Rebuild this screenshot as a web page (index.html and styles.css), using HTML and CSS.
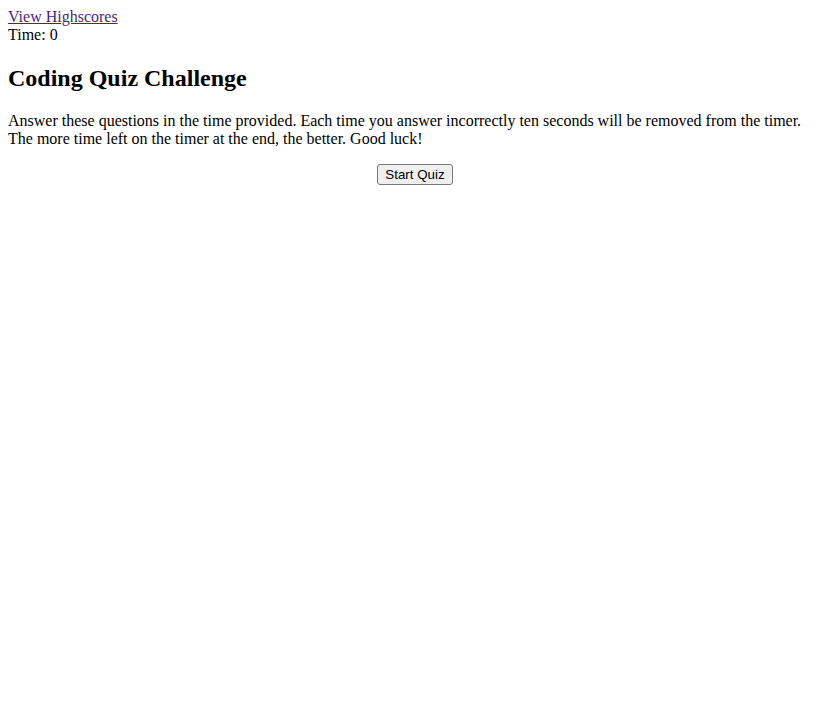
FILE: index.html
```html
<!DOCTYPE html>
<html>
<head>
<meta charset="utf-8">
<link rel="stylesheet" href="styles.css">
</head>
<body class="page">
  <header class="top">
    <a class="scores-link" href="#">View Highscores</a>
    <div class="timer">Time: 0</div>
  </header>
  <main class="intro">
    <h2 class="title">Coding Quiz Challenge</h2>
    <p class="desc">Answer these questions in the time provided. Each time you answer incorrectly ten seconds will be removed from the timer. The more time left on the timer at the end, the better. Good luck!</p>
    <div class="actions">
      <button class="start-btn" type="button">Start Quiz</button>
    </div>
  </main>
</body>
</html>
```
FILE: styles.css
```css
html, body {
  background: #ffffff;
}
.page {
  margin: 8px;
  font-family: "Liberation Serif", "Times New Roman", serif;
  font-size: 16px;
  line-height: normal;
  color: #000000;
}
.scores-link {
  color: #551a8b;
  text-decoration: underline;
}
.timer {
  display: block;
}
.title {
  font-size: 24px;
  font-weight: bold;
  margin: 20.92px 0 19.92px;
}
.desc {
  margin: 16px 0;
}
.actions {
  text-align: center;
}
.start-btn {
  font-family: "Liberation Sans", Arial, sans-serif;
  font-size: 13.333px;
  color: #000000;
  background: #efefef;
  border: 1px solid #767676;
  border-radius: 3px;
  padding: 2px 7px;
  margin: 0;
}
```
